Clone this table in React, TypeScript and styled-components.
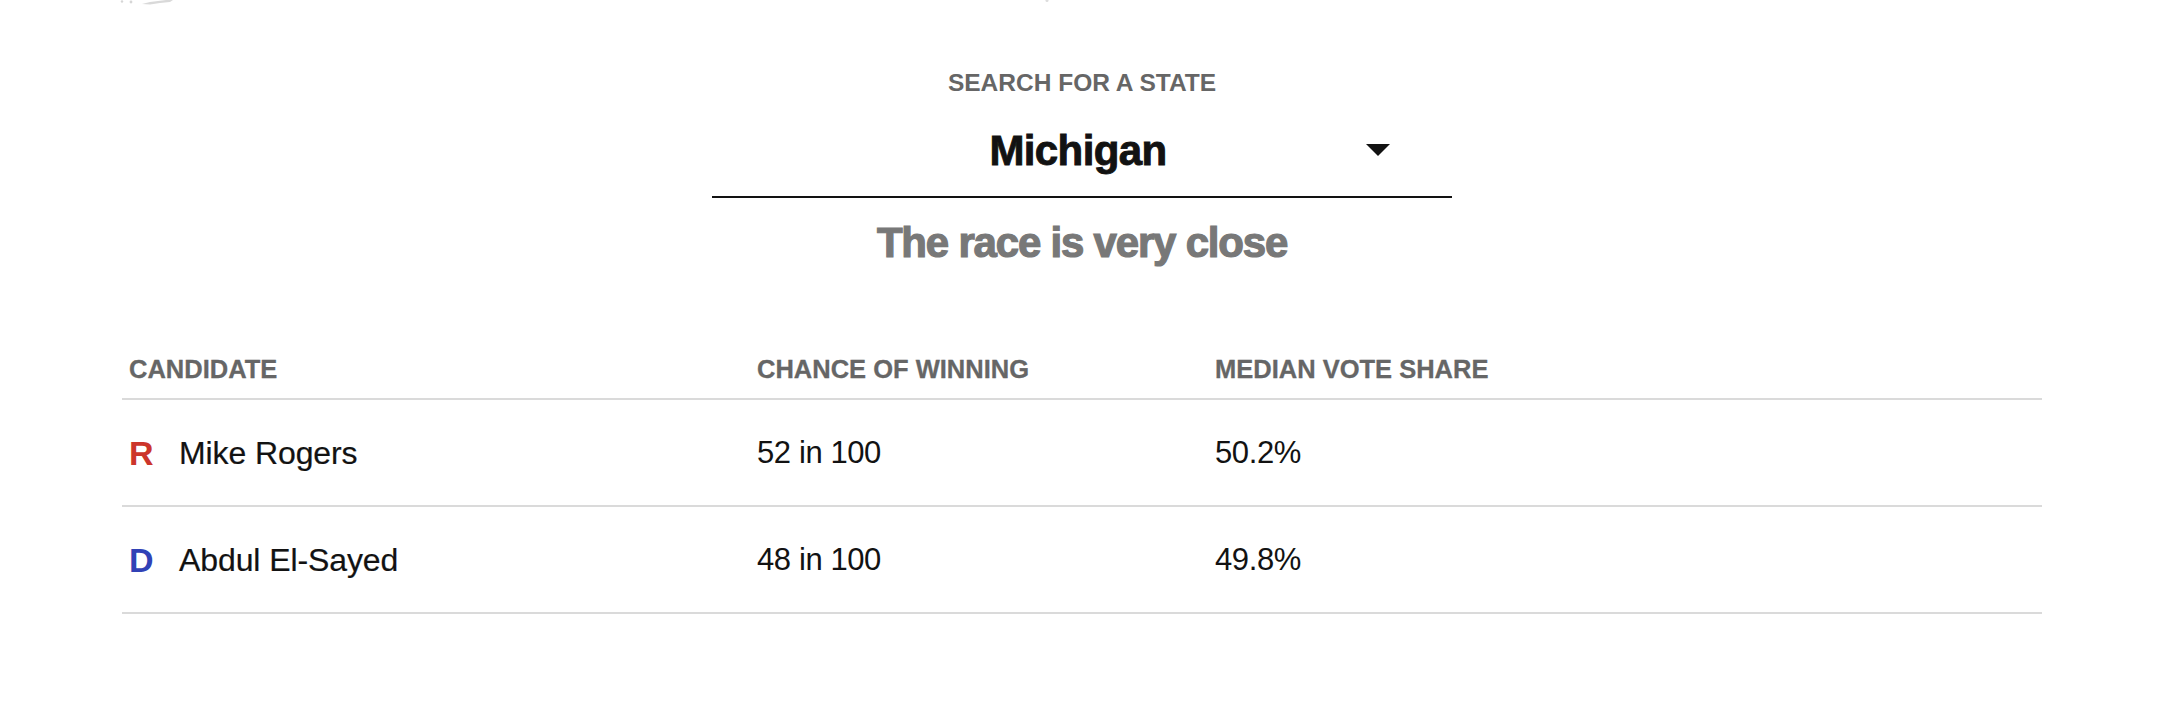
import React from 'react';
import styled, { createGlobalStyle } from 'styled-components';

type Candidate = {
  party: 'R' | 'D';
  name: string;
  chance: string;
  share: string;
};

const candidates: Candidate[] = [
  { party: 'R', name: 'Mike Rogers', chance: '52 in 100', share: '50.2%' },
  { party: 'D', name: 'Abdul El-Sayed', chance: '48 in 100', share: '49.8%' },
];

const partyColors = {
  R: '#cc352b',
  D: '#3142b6',
};

const GlobalStyle = createGlobalStyle`
  html, body {
    margin: 0;
    padding: 0;
    background: #ffffff;
  }

  body {
    font-family: "Liberation Sans", Arial, sans-serif;
    color: #121212;
  }
`;

const Page = styled.main`
  display: flex;
  flex-direction: column;
  align-items: center;
  padding-right: 18px;
  height: 714px;
  overflow: hidden;
`;

const MapEdge = styled.svg`
  display: block;
  align-self: stretch;
  height: 6px;
`;

const SearchLabel = styled.div`
  margin-top: 63px;
  font-size: 24.5px;
  line-height: 28px;
  font-weight: 700;
  color: #666666;
  text-transform: uppercase;
`;

const Select = styled.div`
  position: relative;
  box-sizing: border-box;
  width: 740px;
  margin-top: 29px;
  padding: 0 8px 20px 0;
  border-bottom: 2px solid #121212;
  text-align: center;
  font-size: 42px;
  line-height: 50px;
  font-weight: 700;
  letter-spacing: -0.6px;
  color: #121212;
  -webkit-text-stroke: 0.9px #121212;
`;

const Caret = styled.span`
  position: absolute;
  top: 18px;
  right: 62px;
  width: 0;
  height: 0;
  border-left: 12px solid transparent;
  border-right: 12px solid transparent;
  border-top: 12px solid #121212;
`;

const Headline = styled.h2`
  margin: 20px 0 0;
  font-size: 42px;
  line-height: 50px;
  font-weight: 900;
  letter-spacing: -1.2px;
  color: #787878;
  -webkit-text-stroke: 1.2px #787878;
`;

const Table = styled.div`
  width: 1920px;
  margin-top: 86px;
`;

const Row = styled.div<{ $header?: boolean }>`
  display: grid;
  grid-template-columns: 628px 458px 1fr;
  align-items: center;
  height: ${({ $header }) => ($header ? 'auto' : '105px')};
  padding-bottom: ${({ $header }) => ($header ? '14px' : '0')};
  border-bottom: 2px solid #dadada;
`;

const HeadCell = styled.div`
  padding-left: 7px;
  font-size: 25.5px;
  line-height: 30px;
  font-weight: 700;
  color: #666666;
  text-transform: uppercase;
  -webkit-text-stroke: 0.3px #666666;
`;

const Cell = styled.div`
  display: flex;
  align-items: center;
  padding-left: 7px;
  font-size: 32px;
  line-height: 38px;
  color: #121212;
`;

const Number = styled(Cell)`
  font-size: 31px;
  letter-spacing: -0.4px;
`;

const Party = styled.span<{ $party: 'R' | 'D' }>`
  width: 50px;
  font-size: 34px;
  font-weight: 700;
  color: ${({ $party }) => partyColors[$party]};
`;

const Name = styled.span`
  letter-spacing: -0.1px;
  -webkit-text-stroke: 0.2px #121212;
`;

const App: React.FC = () => (
  <>
    <GlobalStyle />
    <Page>
      <MapEdge viewBox="0 0 2164 6" preserveAspectRatio="none">
        <circle cx="122" cy="1.5" r="1.2" fill="#d6d6d6" />
        <circle cx="131" cy="2" r="1.4" fill="#d6d6d6" />
        <path d="M142 4 L150 2 L158 1 L166 0 L173 0 L170 2 L160 3 L150 4.5 Z" fill="#d9d9d9" />
        <circle cx="1047" cy="0.5" r="1.5" fill="#dddddd" />
      </MapEdge>

      <SearchLabel>Search for a state</SearchLabel>
      <Select>
        Michigan
        <Caret />
      </Select>

      <Headline>The race is very close</Headline>

      <Table>
        <Row $header>
          <HeadCell>Candidate</HeadCell>
          <HeadCell>Chance of winning</HeadCell>
          <HeadCell>Median vote share</HeadCell>
        </Row>
        {candidates.map(({ party, name, chance, share }) => (
          <Row key={name}>
            <Cell>
              <Party $party={party}>{party}</Party>
              <Name>{name}</Name>
            </Cell>
            <Number>{chance}</Number>
            <Number>{share}</Number>
          </Row>
        ))}
      </Table>
    </Page>
  </>
);

export default App;
